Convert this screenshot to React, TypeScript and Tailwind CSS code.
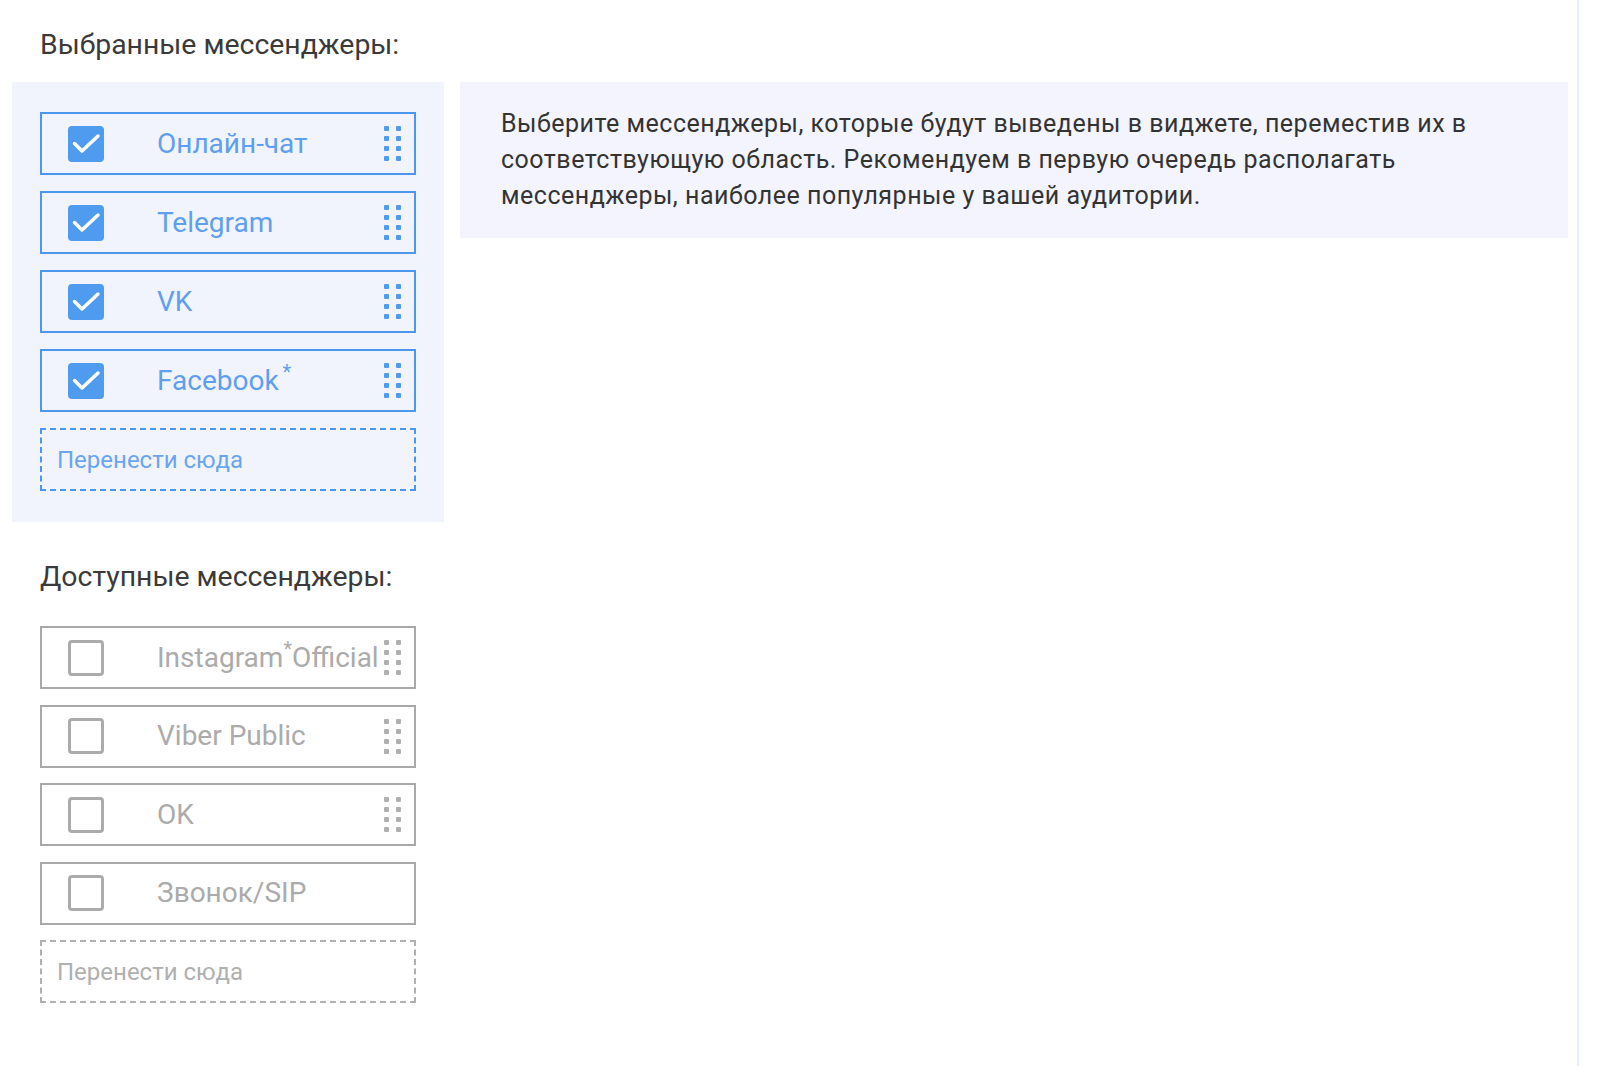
import React from "react";

type Item = { label: React.ReactNode; drag?: boolean };

const Star = ({ gap }: { gap?: boolean }) => (
  <span className={`inline-block relative top-[-11px] text-[20px] ${gap ? "ml-[4px]" : ""}`}>*</span>
);

const selected: Item[] = [
  { label: "Онлайн-чат", drag: true },
  { label: "Telegram", drag: true },
  { label: "VK", drag: true },
  {
    label: (
      <>
        Facebook
        <Star gap />
      </>
    ),
    drag: true,
  },
];

const available: Item[] = [
  {
    label: (
      <>
        Instagram
        <Star />
        Official
      </>
    ),
    drag: true,
  },
  { label: "Viber Public", drag: true },
  { label: "OK", drag: true },
  { label: "Звонок/SIP" },
];

function DragDots({ active }: { active: boolean }) {
  return (
    <div className="grid grid-cols-2 gap-x-[7px] gap-y-[5px]">
      {Array.from({ length: 8 }).map((_, i) => (
        <span
          key={i}
          className={`w-[5px] h-[5px] rounded-[1px] ${active ? "bg-[#4f9bf0]" : "bg-[#b0b0b0]"}`}
        />
      ))}
    </div>
  );
}

function Row({ item, active }: { item: Item; active: boolean }) {
  return (
    <div
      className={`h-[63px] flex items-center border-2 pl-[26px] pr-[13px] ${
        active ? "border-[#4c97ee]" : "border-[#a9a9a9]"
      }`}
    >
      {active ? (
        <div className="w-[36px] h-[36px] rounded-[4px] bg-[#4f9bf0] flex items-center justify-center shrink-0">
          <svg width="36" height="36" viewBox="0 0 36 36">
            <path d="M6.5 17.5 L14 25 L30 10" fill="none" stroke="white" strokeWidth="3.5" strokeLinecap="round" strokeLinejoin="round" />
          </svg>
        </div>
      ) : (
        <div className="w-[36px] h-[36px] rounded-[4px] border-[3px] border-[#ababab] shrink-0" />
      )}
      <span
        className={`ml-[53px] flex-1 text-[28px] leading-none whitespace-nowrap ${
          active ? "text-[#5e9ff0]" : "text-[#ababab]"
        }`}
      >
        {item.label}
      </span>
      {item.drag && <DragDots active={active} />}
    </div>
  );
}

function DropZone({ active }: { active: boolean }) {
  return (
    <div
      className={`h-[63px] flex items-center border-2 border-dashed px-[15px] text-[24px] ${
        active ? "border-[#4c97ee] text-[#6aa5f0]" : "border-[#b0b0b0] text-[#b0b0b0]"
      }`}
    >
      Перенести сюда
    </div>
  );
}

export default function App() {
  return (
    <div className="w-[1600px] h-[1066px] bg-white flex font-['Roboto',sans-serif]">
      <div className="w-[1577px] flex gap-[16px] pl-[12px] pr-[9px] pt-[28px]">
        {/* left column */}
        <div className="w-[432px] shrink-0 flex flex-col">
          <h2 className="pl-[28px] text-[28.4px] leading-[34px] text-[#3a3a3a] font-normal">
            Выбранные мессенджеры:
          </h2>
          <div className="mt-[20px] bg-[#f2f4fd] pt-[30px] pb-[31px] px-[28px] flex flex-col gap-[16px]">
            {selected.map((it, i) => (
              <Row key={i} item={it} active />
            ))}
            <DropZone active />
          </div>

          <h2 className="mt-[38px] pl-[28px] text-[28.4px] leading-[34px] text-[#3a3a3a] font-normal">
            Доступные мессенджеры:
          </h2>
          <div className="mt-[32px] px-[28px] flex flex-col gap-[15.5px]">
            {available.map((it, i) => (
              <Row key={i} item={it} active={false} />
            ))}
            <DropZone active={false} />
          </div>
        </div>

        {/* right column */}
        <div className="flex-1 mt-[54px]">
          <div className="bg-[#f3f4fe] px-[41px] py-[24px] text-[25px] leading-[36px] tracking-[0.5px] text-[#333333]">
            Выберите мессенджеры, которые будут выведены в виджете, переместив их в
            <br />
            соответствующую область. Рекомендуем в первую очередь располагать
            <br />
            мессенджеры, наиболее популярные у вашей аудитории.
          </div>
        </div>
      </div>
      <div className="w-[2px] h-full bg-[#e6eefb]" />
      <div className="flex-1" />
    </div>
  );
}
